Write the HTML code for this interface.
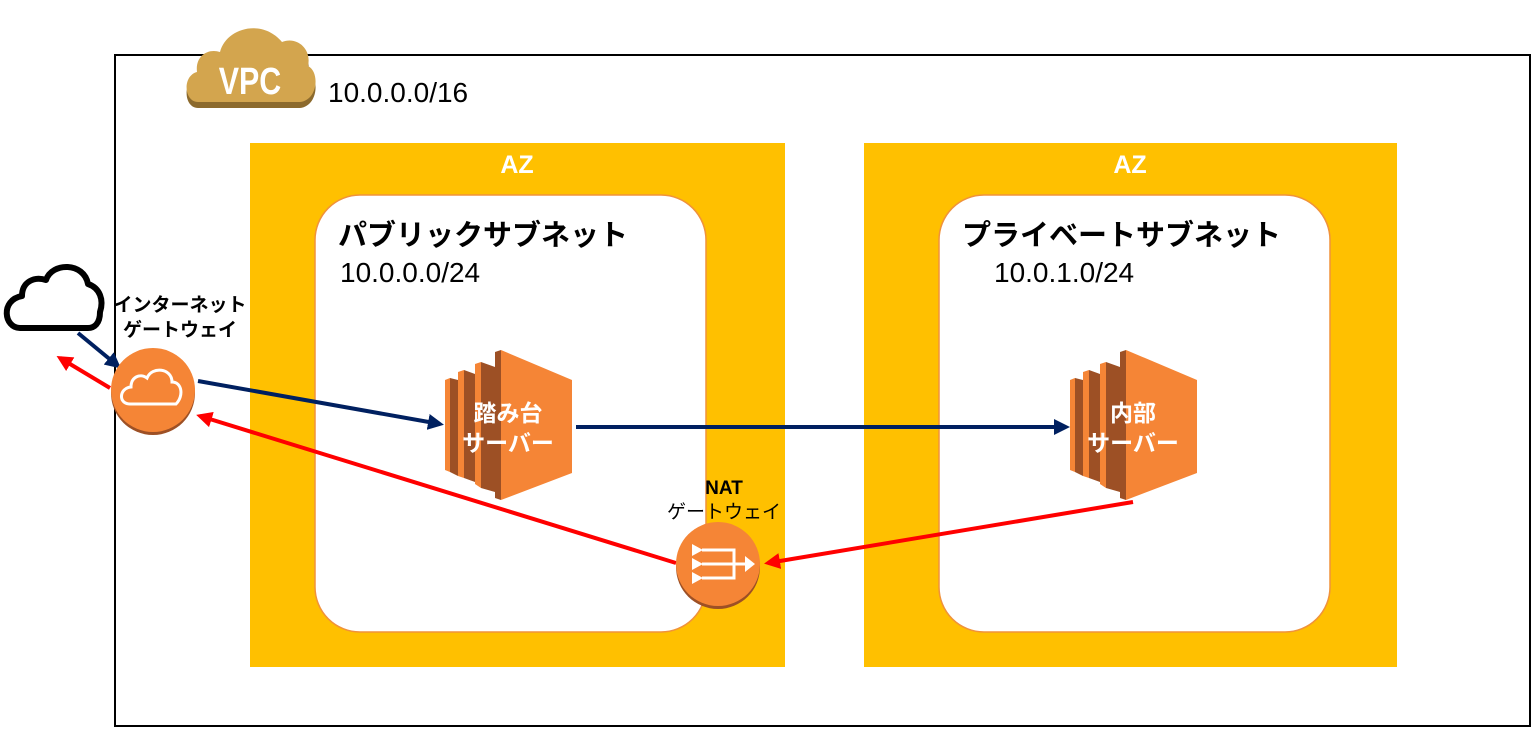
<!DOCTYPE html>
<html><head><meta charset="utf-8"><style>
body{margin:0;background:#fff;}
svg text{font-family:"Liberation Sans","Noto Sans CJK JP",sans-serif;}
</style></head><body>
<svg width="1532" height="728" viewBox="0 0 1532 728" xmlns="http://www.w3.org/2000/svg">
<defs>
<marker id="ab" markerWidth="4" markerHeight="4" refX="3" refY="2" orient="auto" markerUnits="strokeWidth"><path d="M0,0 L4,2 L0,4z" fill="#002060"/></marker>
<marker id="ar" markerWidth="4" markerHeight="4" refX="3" refY="2" orient="auto" markerUnits="strokeWidth"><path d="M0,0 L4,2 L0,4z" fill="#FF0000"/></marker>
<g id="ec2">
<path d="M0,30 L5,28 L5,122 L0,120z" fill="#F58536"/><path d="M5,28 L13,30 L13,126 L5,122z" fill="#9D5025"/>
<path d="M13,22 L19,20 L19,128 L13,126z" fill="#F58536"/><path d="M19,20 L30,24 L30,132 L19,128z" fill="#9D5025"/>
<path d="M30,14 L36,12 L36,138 L30,134z" fill="#F58536"/><path d="M36,12 L50,17 L50,142 L36,138z" fill="#9D5025"/>
<path d="M50,2 L56,0 L56,150 L50,148z" fill="#9D5025"/><path d="M56,0 L127,30 L127,123 L56,150z" fill="#F58536"/>
</g>
</defs>
<rect x="115" y="55" width="1415" height="671" fill="#fff" stroke="#000" stroke-width="2"/>
<path d="M198,108 C184,108 182,82 197,78 C195,62 208,54 220,58 C226,34 262,24 282,48 C296,42 312,54 308,72 C320,78 318,106 300,108z" fill="#8C6A2D"/>
<path d="M198,102 C184,102 182,76 197,72 C195,56 208,48 220,52 C226,28 262,18 282,42 C296,36 312,48 308,66 C320,72 318,100 300,102z" fill="#D3A54E"/>
<text x="250" y="94" font-size="38" font-weight="bold" fill="#fff" text-anchor="middle" transform="translate(250,0) scale(0.8,1) translate(-250,0)">VPC</text>
<text x="328" y="102" font-size="28" fill="#000">10.0.0.0/16</text>
<rect x="250" y="143" width="535" height="524" fill="#FFC000"/>
<rect x="864" y="143" width="533" height="524" fill="#FFC000"/>
<text x="517" y="173" font-size="25" font-weight="bold" fill="#fff" text-anchor="middle">AZ</text>
<text x="1130" y="173" font-size="25" font-weight="bold" fill="#fff" text-anchor="middle">AZ</text>
<rect x="315" y="195" width="391" height="437" rx="45" fill="#fff" stroke="#F0923A" stroke-width="1.5"/>
<rect x="939" y="195" width="391" height="437" rx="45" fill="#fff" stroke="#F0923A" stroke-width="1.5"/>
<text x="338" y="245" font-size="29" font-weight="bold" fill="#000">パブリックサブネット</text>
<text x="340" y="282" font-size="28" fill="#000">10.0.0.0/24</text>
<text x="962" y="245" font-size="29" font-weight="bold" fill="#000">プライベートサブネット</text>
<text x="994" y="282" font-size="28" fill="#000">10.0.1.0/24</text>
<path d="M20,328 C4,328 0,300 22,296 C22,282 34,276 46,280 C52,262 84,262 88,284 C100,288 104,300 100,312 C100,324 94,328 88,328z" fill="#fff" stroke="#000" stroke-width="6" stroke-linejoin="round"/>
<text x="180" y="311" font-size="19" font-weight="bold" fill="#000" text-anchor="middle">インターネット</text>
<text x="180" y="336" font-size="19" font-weight="bold" fill="#000" text-anchor="middle">ゲートウェイ</text>
<line x1="78" y1="333" x2="118" y2="366" stroke="#002060" stroke-width="4" marker-end="url(#ab)"/>
<line x1="110" y1="388" x2="60" y2="358" stroke="#FF0000" stroke-width="4" marker-end="url(#ar)"/>
<line x1="198" y1="381" x2="440" y2="424" stroke="#002060" stroke-width="4" marker-end="url(#ab)"/>
<line x1="576" y1="427" x2="1066" y2="427" stroke="#002060" stroke-width="4" marker-end="url(#ab)"/>
<line x1="1133" y1="502" x2="768" y2="563" stroke="#FF0000" stroke-width="4" marker-end="url(#ar)"/>
<line x1="676" y1="563" x2="200" y2="416" stroke="#FF0000" stroke-width="4" marker-end="url(#ar)"/>
<circle cx="153" cy="393" r="42" fill="#9D5025"/>
<circle cx="153" cy="390" r="42" fill="#F58536"/>
<path d="M130,404 C118,404 119,388 131,387 C131,377 140,373 147,378 C152,366 172,368 172,382 C182,382 184,396 176,404z" fill="none" stroke="#fff" stroke-width="3"/>
<use href="#ec2" x="445" y="350"/>
<use href="#ec2" x="1070" y="350"/>
<text x="508" y="421" font-size="23" font-weight="bold" fill="#fff" text-anchor="middle">踏み台</text>
<text x="508" y="451" font-size="23" font-weight="bold" fill="#fff" text-anchor="middle">サーバー</text>
<text x="1133" y="421" font-size="23" font-weight="bold" fill="#fff" text-anchor="middle">内部</text>
<text x="1133" y="451" font-size="23" font-weight="bold" fill="#fff" text-anchor="middle">サーバー</text>
<text x="724" y="494" font-size="19" font-weight="bold" fill="#000" text-anchor="middle">NAT</text>
<text x="724" y="518" font-size="19" fill="#000" text-anchor="middle">ゲートウェイ</text>
<circle cx="718" cy="567" r="42" fill="#9D5025"/>
<circle cx="718" cy="564" r="42" fill="#F58536"/>
<g fill="#fff">
<path d="M692,544 L703,550 L692,556z"/><path d="M692,558 L703,564 L692,570z"/><path d="M692,572 L703,578 L692,584z"/>
<path d="M745,556 L755,564 L745,572z"/>
</g>
<g fill="none" stroke="#fff" stroke-width="3">
<path d="M702,550 L734,550 L734,578 L702,578 M702,564 L746,564"/>
</g>
</svg>
</body></html>
